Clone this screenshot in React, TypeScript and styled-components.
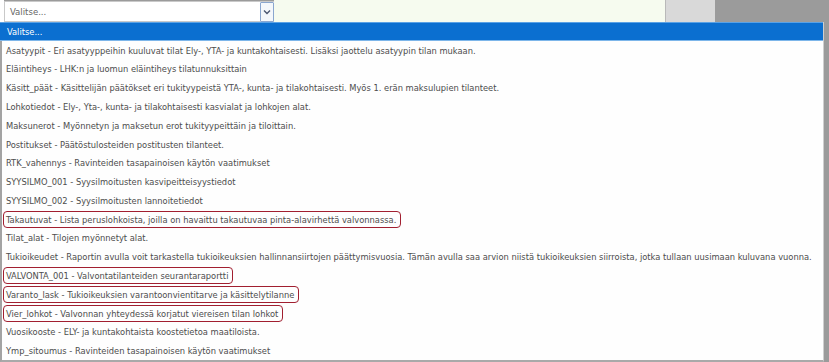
import styled, { createGlobalStyle } from 'styled-components';

const GlobalStyle = createGlobalStyle`
  html, body {
    margin: 0;
    padding: 0;
    background: #9b9b9b;
  }
`;

const Page = styled.div`
  width: 829px;
  height: 362px;
  overflow: hidden;
  background: #9b9b9b;
  font-family: 'DejaVu Sans', Verdana, sans-serif;
  font-stretch: condensed;
`;

const TopBar = styled.div`
  display: flex;
  height: 22px;
`;

const WhiteCell = styled.div`
  width: 4px;
  background: #ffffff;
`;

const SelectBox = styled.div`
  box-sizing: border-box;
  width: 270px;
  height: 21px;
  margin-top: 1px;
  display: flex;
  align-items: center;
  background: #ffffff;
  border: 1px solid #c9c9c9;
  border-right: none;
`;

const SelectText = styled.span`
  flex: 1;
  padding-left: 5px;
  font-size: 9.5px;
  color: #666666;
`;

const SelectButton = styled.div`
  box-sizing: border-box;
  width: 14px;
  height: 20px;
  display: flex;
  align-items: center;
  justify-content: center;
  border: 1px solid #8aa6cf;
  border-radius: 1px;
  background: #f4f7fb;
`;

const GreenFill = styled.div`
  width: 391px;
  background: #f6fbef;
  border-right: 1px solid #b9b9b9;
`;

const GreyCell = styled.div`
  width: 49px;
  background: #d9d9d9;
`;

const List = styled.div`
  box-sizing: border-box;
  width: 824px;
  height: 340px;
  display: grid;
  grid-template-rows: repeat(18, 1fr);
  background: #fefefe;
  border-left: 2px solid #a3a3a3;
  border-right: 1px solid #cfcfcf;
  border-bottom: 2px solid #a9a9a9;
`;

const Option = styled.div<{ $active?: boolean }>`
  display: flex;
  align-items: center;
  padding-left: ${(p) => (p.$active ? '7px' : '4px')};
  margin-left: ${(p) => (p.$active ? '-2px' : '0')};
  font-size: 9.25px;
  white-space: nowrap;
  color: ${(p) => (p.$active ? '#ffffff' : '#4d4d4d')};
  background: ${(p) => (p.$active ? '#0b6fd0' : 'transparent')};
  border-top: ${(p) => (p.$active ? '1px solid #5aa2e6' : 'none')};
  border-bottom: ${(p) => (p.$active ? '1px solid #7db6ea' : 'none')};
`;

const Mark = styled.span`
  box-sizing: border-box;
  display: inline-flex;
  align-items: center;
  height: 17px;
  margin-left: -3px;
  padding: 0 4px 0 2px;
  border: 1.5px solid #a11f30;
  border-radius: 4px;
`;

const rows: { text: string; marked?: boolean }[] = [
  { text: 'Asatyypit - Eri asatyyppeihin kuuluvat tilat Ely-, YTA- ja kuntakohtaisesti. Lisäksi jaottelu asatyypin tilan mukaan.' },
  { text: 'Eläintiheys - LHK:n ja luomun eläintiheys tilatunnuksittain' },
  { text: 'Käsitt_päät - Käsittelijän päätökset eri tukityypeistä YTA-, kunta- ja tilakohtaisesti. Myös 1. erän maksulupien tilanteet.' },
  { text: 'Lohkotiedot - Ely-, Yta-, kunta- ja tilakohtaisesti kasvialat ja lohkojen alat.' },
  { text: 'Maksunerot - Myönnetyn ja maksetun erot tukityypeittäin ja tiloittain.' },
  { text: 'Postitukset - Päätöstulosteiden postitusten tilanteet.' },
  { text: 'RTK_vahennys - Ravinteiden tasapainoisen käytön vaatimukset' },
  { text: 'SYYSILMO_001 - Syysilmoitusten kasvipeitteisyystiedot' },
  { text: 'SYYSILMO_002 - Syysilmoitusten lannoitetiedot' },
  { text: 'Takautuvat - Lista peruslohkoista, joilla on havaittu takautuvaa pinta-alavirhettä valvonnassa.', marked: true },
  { text: 'Tilat_alat - Tilojen myönnetyt alat.' },
  { text: 'Tukioikeudet - Raportin avulla voit tarkastella tukioikeuksien hallinnansiirtojen päättymisvuosia. Tämän avulla saa arvion niistä tukioikeuksien siirroista, jotka tullaan uusimaan kuluvana vuonna.' },
  { text: 'VALVONTA_001 - Valvontatilanteiden seurantaraportti', marked: true },
  { text: 'Varanto_lask - Tukioikeuksien varantoonvientitarve ja käsittelytilanne', marked: true },
  { text: 'Vier_lohkot - Valvonnan yhteydessä korjatut viereisen tilan lohkot', marked: true },
  { text: 'Vuosikooste - ELY- ja kuntakohtaista koostetietoa maatiloista.' },
  { text: 'Ymp_sitoumus - Ravinteiden tasapainoisen käytön vaatimukset' },
];

function Chevron() {
  return (
    <svg width="8" height="6" viewBox="0 0 8 6">
      <path d="M1 1.5 L4 4.5 L7 1.5" fill="none" stroke="#4a5670" strokeWidth="1.4" />
    </svg>
  );
}

export default function App() {
  return (
    <Page>
      <GlobalStyle />
      <TopBar>
        <WhiteCell />
        <SelectBox>
          <SelectText>Valitse...</SelectText>
          <SelectButton>
            <Chevron />
          </SelectButton>
        </SelectBox>
        <GreenFill />
        <GreyCell />
      </TopBar>
      <List>
        <Option $active>Valitse...</Option>
        {rows.map((r) => (
          <Option key={r.text}>{r.marked ? <Mark>{r.text}</Mark> : r.text}</Option>
        ))}
      </List>
    </Page>
  );
}
